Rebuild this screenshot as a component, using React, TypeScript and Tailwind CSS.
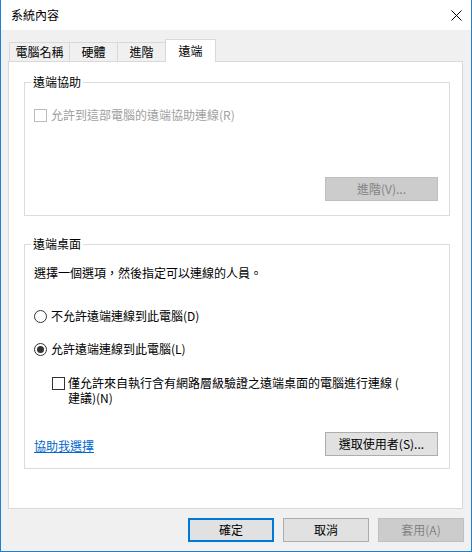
import React from "react";

function Checkbox({ disabled }: { disabled?: boolean }) {
  return (
    <span
      className={
        "block w-[13px] h-[13px] shrink-0 bg-white border " +
        (disabled ? "border-[#bcbcbc]" : "border-[#333333]")
      }
    />
  );
}

function Radio({ checked }: { checked?: boolean }) {
  return (
    <span className="flex items-center justify-center w-[13px] h-[13px] shrink-0 rounded-full bg-white border border-[#333333]">
      {checked ? <span className="block w-[7px] h-[7px] rounded-full bg-[#333333]" /> : null}
    </span>
  );
}

export default function App() {
  return (
    <div className="w-[472px] h-[552px] flex flex-col border-x border-b border-[#1a82d6] bg-[#f0f0f0] text-[12px] leading-[16px] text-black font-['Noto_Sans_CJK_TC','Noto_Sans',sans-serif]">
      {/* Title bar */}
      <div className="h-[30px] shrink-0 bg-white flex items-center justify-between pl-[10px] pr-[9px]">
        <span>系統內容</span>
        <svg width="11" height="11" viewBox="0 0 11 11" className="block">
          <path d="M0.5 0.5 L10.5 10.5 M10.5 0.5 L0.5 10.5" stroke="#000" strokeWidth="1" fill="none" />
        </svg>
      </div>

      {/* Body */}
      <div className="flex-1 flex flex-col pt-[9px] pl-[7px] pr-[8px]">
        {/* Tabs */}
        <div className="h-[22px] flex items-end pl-[1px]">
          <div className="w-[61px] h-[19px] flex items-center justify-center border border-b-0 border-[#d9d9d9] bg-[#f0f0f0]">
            電腦名稱
          </div>
          <div className="-ml-px w-[49px] h-[19px] flex items-center justify-center border border-b-0 border-[#d9d9d9] bg-[#f0f0f0]">
            硬體
          </div>
          <div className="-ml-px w-[49px] h-[19px] flex items-center justify-center border border-b-0 border-[#d9d9d9] bg-[#f0f0f0]">
            進階
          </div>
          <div className="-ml-px -mb-px relative z-10 w-[51px] h-[23px] flex items-center justify-center border border-b-0 border-[#d9d9d9] bg-white">
            遠端
          </div>
        </div>

        {/* Panel */}
        <div className="h-[448px] shrink-0 border border-[#d9d9d9] bg-white pt-[12px] pl-[15px] pr-[12px] flex flex-col">
          {/* Remote assistance */}
          <fieldset className="border border-[#dcdcdc] p-0 m-0 min-w-0">
            <legend className="ml-[6px] px-[2px] leading-[16px]">遠端協助</legend>
            <div className="pl-[9px] pr-[11px] pb-[14px]">
              <div className="mt-[17px] h-[16px] flex items-center gap-[4px] text-[#a0a0a0]">
                <Checkbox disabled />
                <span>允許到這部電腦的遠端協助連線(R)</span>
              </div>
              <div className="mt-[54px] flex justify-end">
                <div className="w-[113px] h-[24px] flex items-center justify-center bg-[#cccccc] border border-[#bfbfbf] text-[#838383]">
                  進階(V)...
                </div>
              </div>
            </div>
          </fieldset>

          {/* Remote desktop */}
          <fieldset className="mt-[20px] border border-[#dcdcdc] p-0 min-w-0">
            <legend className="ml-[6px] px-[2px] leading-[16px]">遠端桌面</legend>
            <div className="pl-[9px] pr-[11px] pb-[12px]">
              <div className="mt-[13px] h-[16px] flex items-center">
                選擇一個選項，然後指定可以連線的人員。
              </div>
              <div className="mt-[27px] h-[16px] flex items-center gap-[4px]">
                <Radio />
                <span>不允許遠端連線到此電腦(D)</span>
              </div>
              <div className="mt-[17px] h-[16px] flex items-center gap-[4px]">
                <Radio checked />
                <span>允許遠端連線到此電腦(L)</span>
              </div>
              <div className="mt-[18px] ml-[18px] flex items-start gap-[3px] leading-[15px]">
                <span className="mt-[2px]">
                  <Checkbox />
                </span>
                <span>
                  僅允許來自執行含有網路層級驗證之遠端桌面的電腦進行連線 (
                  <br />
                  建議)(N)
                </span>
              </div>
              <div className="mt-[27px] flex items-center justify-between">
                <span className="text-[#0066cc] underline mt-[3px]">協助我選擇</span>
                <div className="w-[113px] h-[24px] flex items-center justify-center bg-[#e1e1e1] border border-[#adadad]">
                  選取使用者(S)...
                </div>
              </div>
            </div>
          </fieldset>
        </div>

        {/* Dialog buttons */}
        <div className="mt-[9px] -mr-px flex justify-end gap-[9px]">
          <div className="w-[86px] h-[24px] flex items-center justify-center bg-[#e1e1e1] border-2 border-[#0078d7]">
            確定
          </div>
          <div className="w-[86px] h-[24px] flex items-center justify-center bg-[#e1e1e1] border border-[#adadad]">
            取消
          </div>
          <div className="w-[86px] h-[24px] flex items-center justify-center bg-[#cccccc] border border-[#bfbfbf] text-[#838383]">
            套用(A)
          </div>
        </div>
      </div>
    </div>
  );
}
